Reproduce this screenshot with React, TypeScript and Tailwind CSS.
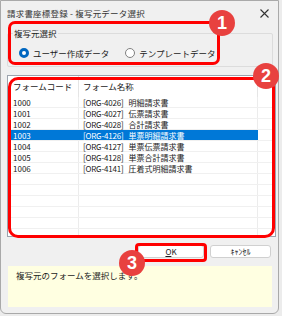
import React from "react";

const jp = { fontFamily: '"Noto Sans CJK JP", "Noto Sans", sans-serif' };

const rows = [
  { code: "1000", tag: "[ORG-4026]", name: "明細請求書" },
  { code: "1001", tag: "[ORG-4027]", name: "伝票請求書" },
  { code: "1002", tag: "[ORG-4028]", name: "合計請求書" },
  { code: "1003", tag: "[ORG-4126]", name: "単票明細請求書", sel: true },
  { code: "1004", tag: "[ORG-4127]", name: "単票伝票請求書" },
  { code: "1005", tag: "[ORG-4128]", name: "単票合計請求書" },
  { code: "1006", tag: "[ORG-4141]", name: "圧着式明細請求書" },
];

function Badge({ n, className }: { n: string; className: string }) {
  return (
    <div
      className={`absolute w-[26px] h-[26px] rounded-full bg-[#e8413f] text-white flex items-center justify-center text-[18px] font-bold leading-none ${className}`}
      style={{ fontFamily: '"Liberation Sans", Arial, sans-serif' }}
    >
      {n}
    </div>
  );
}

export default function App() {
  const empty = Array.from({ length: 7 });
  return (
    <div className="w-[282px] h-[316px] bg-[#ececec] relative overflow-hidden" style={jp}>
      <div className="w-[279px] h-[314px] bg-[#f0f0f0] border border-[#a9a9a9] rounded-b-[6px] flex flex-col text-[#1a1a1a]">
        {/* title bar */}
        <div className="h-[24px] flex items-center justify-between pl-[6px] pr-[7px] shrink-0">
          <span className="text-[8.5px] leading-none text-[#333] tracking-[0.2px]">請求書座標登録 - 複写元データ選択</span>
          <svg width="9" height="9" viewBox="0 0 9 9" className="mr-[2px]">
            <path d="M0.5 0.5 L8.5 8.5 M8.5 0.5 L0.5 8.5" stroke="#333" strokeWidth="1.1" />
          </svg>
        </div>
        <div className="pl-[6px] pr-[2px] flex flex-col">
          {/* group */}
          <div className="relative mt-[8px] mr-[3px] h-[34px] border border-[#dcdcdc] rounded-[2px] flex items-center pl-[11px] gap-[16px] pt-[6px]">
            <span className="absolute -top-[7px] left-[5px] px-[1px] bg-[#f0f0f0] text-[8.5px] leading-[12px]">複写元選択</span>
            <label className="flex items-center gap-[4px] text-[8.5px]">
              <span className="w-[10px] h-[10px] rounded-full border-[3px] border-[#0067c0] bg-white box-border" />
              ユーザー作成データ
            </label>
            <label className="flex items-center gap-[4px] text-[8.5px]">
              <span className="w-[10px] h-[10px] rounded-full border border-[#808080] bg-white box-border" />
              テンプレートデータ
            </label>
          </div>
          {/* list */}
          <div className="mt-[8px] h-[162px] border border-[#9ca3ad] bg-white overflow-hidden">
            <div className="h-[21px] flex text-[8.5px] leading-[21px]">
              <div className="w-[71px] pl-[5px] border-r border-[#e5e5e5]">フォームコード</div>
              <div className="w-[179px] pl-[4px] border-r border-[#e5e5e5]">フォーム名称</div>
              <div className="flex-1" />
            </div>
            {rows.map((r) => (
              <div key={r.code} className="h-[11px] flex text-[8px] leading-[11px] border-b border-[#f0f0f0]">
                <div className={`w-[71px] pl-[5px] ${r.sel ? "bg-[#0078d7] text-white" : "border-r border-[#ececec]"}`}>{r.code}</div>
                <div className={`w-[179px] pl-[4px] whitespace-nowrap ${r.sel ? "bg-[#0078d7] text-white" : "border-r border-[#ececec]"}`}>
                  <span className="tracking-[-0.2px]">{r.tag}</span>
                  <span className="ml-[5px]">{r.name}</span>
                </div>
                <div className="flex-1" />
              </div>
            ))}
            {empty.map((_, i) => (
              <div key={i} className="h-[11px] flex border-b border-[#f0f0f0]">
                <div className="w-[71px] border-r border-[#ececec]" />
                <div className="w-[179px] border-r border-[#ececec]" />
                <div className="flex-1" />
              </div>
            ))}
          </div>
          {/* buttons */}
          <div className="mt-[8px] flex justify-end gap-[6px] pr-[5px]">
            <button className="w-[66px] h-[13px] bg-white border border-[#d0d0d0] rounded-[3px] text-[8px] leading-none flex items-center justify-center">
              <span className="underline">O</span>K
            </button>
            <button className="w-[61px] h-[13px] bg-white border border-[#d0d0d0] rounded-[3px] text-[8px] leading-none flex items-center justify-center">
              ｷｬﾝｾﾙ
            </button>
          </div>
          {/* message */}
          <div className="mt-[8px] ml-[1px] mr-[4px] h-[41px] bg-[#ffffe1] pl-[8px] pt-[3px] text-[8.5px] leading-[12px]">
            複写元のフォームを選択します。
          </div>
        </div>
      </div>

      {/* annotations */}
      <div className="absolute left-[8px] top-[21px] w-[212px] h-[44px] border-[3px] border-[#f00] rounded-[7px]" />
      <Badge n="1" className="left-[209px] top-[10px]" />
      <div className="absolute left-[8px] top-[77px] w-[267px] h-[161px] border-[3px] border-[#f00] rounded-[10px]" />
      <Badge n="2" className="left-[253px] top-[63px]" />
      <div className="absolute left-[135px] top-[243px] w-[72px] h-[19px] border-[3px] border-[#f00] rounded-[4px]" />
      <Badge n="3" className="left-[119px] top-[250px]" />
    </div>
  );
}
